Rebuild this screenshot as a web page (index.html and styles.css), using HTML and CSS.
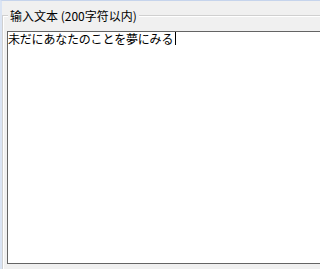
FILE: index.html
```html
<!DOCTYPE html>
<html lang="zh">
<head>
<meta charset="utf-8">
<link rel="stylesheet" href="styles.css">
</head>
<body>
<div class="window">
  <div class="group">
    <div class="title">输入文本 (200字符以内)</div>
    <div class="input" lang="ja">未だにあなたのことを夢にみる<span class="caret"></span></div>
  </div>
</div>
</body>
</html>
```

FILE: styles.css
```css
html, body {
  margin: 0;
  padding: 0;
}
body {
  height: 269px;
  overflow: hidden;
  background: #f0f0f0;
}
.window {
  box-sizing: border-box;
  height: 269px;
  overflow: hidden;
  background: #f0f0f0;
  border-top: 1px solid #c6d4ec;
  border-left: 2px solid #dae4f4;
  padding-top: 14px;
}
.group {
  border-top: 1px solid #d0d0d0;
  border-left: 1px solid #d0d0d0;
  box-shadow: inset 1px 1px 0 #ffffff;
  padding-left: 4px;
  height: 300px;
}
.title {
  display: table;
  margin: -7px 0 0 1px;
  padding: 0 2px;
  background: #f0f0f0;
  font-family: "Noto Sans CJK SC", sans-serif;
  font-size: 12px;
  line-height: 14px;
  color: #000;
}
.input {
  box-sizing: border-box;
  width: 400px;
  height: 233px;
  margin-top: 8px;
  background: #fff;
  border: 1px solid #646464;
  border-right: none;
  font-family: "Noto Sans CJK JP", sans-serif;
  font-size: 12px;
  line-height: 13px;
  letter-spacing: -0.2px;
  color: #000;
  white-space: nowrap;
}
.caret {
  display: inline-block;
  width: 1px;
  height: 13px;
  margin-left: 2px;
  vertical-align: top;
  background: #000;
}
```
